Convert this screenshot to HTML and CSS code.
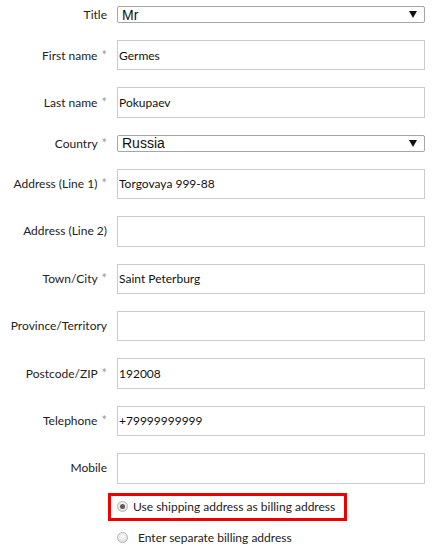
FILE: index.html
```html
<!DOCTYPE html>
<html>
<head>
<meta charset="utf-8">
<link rel="stylesheet" href="styles.css">
</head>
<body>
<form class="form">
  <div class="row row-sel">
    <label class="lbl">Title</label>
    <div class="select"><span>Mr</span><svg class="arrow" width="8" height="7" viewBox="0 0 8 7"><path d="M0 0H8L4 7Z" fill="#111"/></svg></div>
  </div>
  <div class="row">
    <label class="lbl">First name <span class="req">*</span></label>
    <input class="inp" type="text" value="Germes">
  </div>
  <div class="row">
    <label class="lbl">Last name <span class="req">*</span></label>
    <input class="inp" type="text" value="Pokupaev">
  </div>
  <div class="row row-sel">
    <label class="lbl">Country <span class="req">*</span></label>
    <div class="select"><span>Russia</span><svg class="arrow" width="8" height="7" viewBox="0 0 8 7"><path d="M0 0H8L4 7Z" fill="#111"/></svg></div>
  </div>
  <div class="row">
    <label class="lbl">Address (Line 1) <span class="req">*</span></label>
    <input class="inp" type="text" value="Torgovaya 999-88">
  </div>
  <div class="row">
    <label class="lbl">Address (Line 2)</label>
    <input class="inp" type="text" value="">
  </div>
  <div class="row">
    <label class="lbl">Town/City <span class="req">*</span></label>
    <input class="inp" type="text" value="Saint Peterburg">
  </div>
  <div class="row">
    <label class="lbl">Province/Territory</label>
    <input class="inp" type="text" value="">
  </div>
  <div class="row">
    <label class="lbl">Postcode/ZIP <span class="req">*</span></label>
    <input class="inp" type="text" value="192008">
  </div>
  <div class="row">
    <label class="lbl">Telephone <span class="req">*</span></label>
    <input class="inp" type="text" value="+79999999999">
  </div>
  <div class="row">
    <label class="lbl">Mobile</label>
    <input class="inp" type="text" value="">
  </div>
  <div class="radios">
    <div class="highlight">
      <span class="radio checked"></span>
      <span class="rtext">Use shipping address as billing address</span>
    </div>
    <div class="ropt">
      <span class="radio"></span>
      <span class="rtext">Enter separate billing address</span>
    </div>
  </div>
</form>
</body>
</html>
```
FILE: styles.css
```css
html, body {
  margin: 0;
  padding: 0;
  background: #fff;
}
.form {
  display: flex;
  flex-direction: column;
  gap: 17px;
  padding-top: 6px;
  font-family: Lato, "Open Sans", sans-serif;
  font-size: 12px;
  line-height: 14px;
  color: #222;
}
.row {
  display: grid;
  grid-template-columns: 107px 308px;
  grid-template-rows: 30.4px;
  column-gap: 10px;
  align-items: center;
  height: 30.4px;
}
.row-sel {
  grid-template-rows: 17px;
  height: 17px;
}
.lbl {
  text-align: right;
  white-space: nowrap;
}
.req {
  color: #9a9a9a;
  font-size: 13px;
  margin-left: 1px;
}
.select {
  box-sizing: border-box;
  height: 17.5px;
  border: 1px solid #a6a6a6;
  border-radius: 2px;
  background: #fff;
  display: flex;
  align-items: center;
  justify-content: space-between;
  padding: 0 7px 0 4px;
  font-family: "Liberation Sans", Arial, sans-serif;
  font-size: 14px;
  line-height: 16px;
  color: #111;
}
.arrow {
  display: block;
}
.inp {
  box-sizing: border-box;
  height: 30.4px;
  width: 308px;
  margin: 0;
  border: 1px solid #cbcbcb;
  background: #fff;
  padding: 0 1px;
  font-family: Lato, "Open Sans", sans-serif;
  font-size: 12px;
  color: #111;
  outline: none;
}
.radios {
  display: flex;
  flex-direction: column;
  align-items: flex-start;
  padding-left: 108px;
  margin-top: -8px;
}
.highlight {
  box-sizing: border-box;
  height: 28px;
  width: 239px;
  border: 3px solid #ee0000;
  display: flex;
  align-items: center;
  padding-left: 6px;
  gap: 5px;
}
.ropt {
  height: 34px;
  display: flex;
  align-items: center;
  padding-left: 9px;
  gap: 10px;
}
.radio {
  box-sizing: border-box;
  width: 11px;
  height: 11px;
  border-radius: 50%;
  border: 1px solid #b5b5b5;
  background: radial-gradient(circle at 50% 35%, #fdfdfd 0%, #e2e2e2 70%, #d0d0d0 100%);
  position: relative;
  flex: none;
}
.radio.checked::after {
  content: "";
  position: absolute;
  left: 2px;
  top: 2px;
  width: 5px;
  height: 5px;
  border-radius: 50%;
  background: #5a5a5a;
}
.rtext {
  color: #222;
  white-space: nowrap;
}
```
